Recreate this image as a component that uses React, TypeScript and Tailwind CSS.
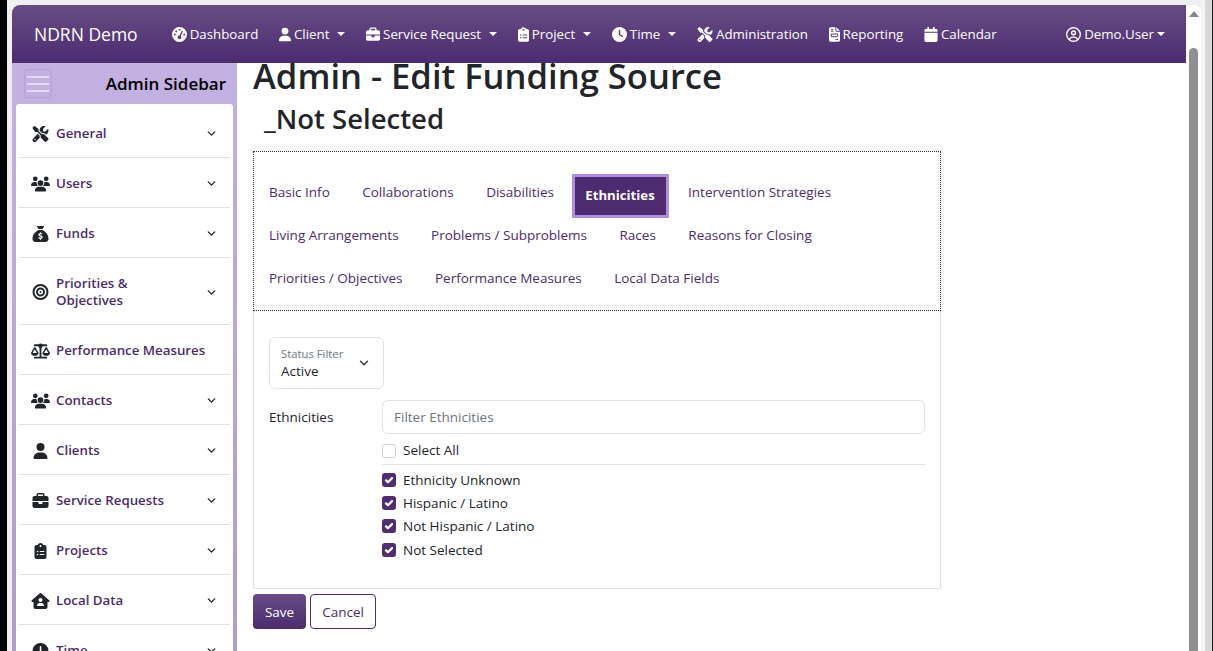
import {
  FaGaugeHigh,
  FaUser,
  FaBriefcase,
  FaClipboardList,
  FaClock,
  FaScrewdriverWrench,
  FaFileInvoice,
  FaCalendar,
  FaRegCircleUser,
  FaUsers,
  FaBullseye,
  FaScaleBalanced,
  FaHouseUser,
  FaSackDollar,
} from "react-icons/fa6";
import { LuChevronDown } from "react-icons/lu";
import type { ComponentType, ReactNode } from "react";

type Icon = ComponentType<{ className?: string }>;

const sidebarItems: { label: ReactNode; icon: Icon; h: string; chevron?: boolean }[] = [
  { label: "General", icon: FaScrewdriverWrench, h: "h-[50px]", chevron: true },
  { label: "Users", icon: FaUsers, h: "h-[50px]", chevron: true },
  { label: "Funds", icon: FaSackDollar, h: "h-[50px]", chevron: true },
  { label: <>Priorities &amp;<br />Objectives</>, icon: FaBullseye, h: "h-[67px]", chevron: true },
  { label: "Performance Measures", icon: FaScaleBalanced, h: "h-[50px]" },
  { label: "Contacts", icon: FaUsers, h: "h-[50px]", chevron: true },
  { label: "Clients", icon: FaUser, h: "h-[50px]", chevron: true },
  { label: "Service Requests", icon: FaBriefcase, h: "h-[50px]", chevron: true },
  { label: "Projects", icon: FaClipboardList, h: "h-[50px]", chevron: true },
  { label: "Local Data", icon: FaHouseUser, h: "h-[50px]", chevron: true },
  { label: "Time", icon: FaClock, h: "h-[50px]", chevron: true },
];

const tabRows = [
  ["Basic Info", "Collaborations", "Disabilities", "Ethnicities", "Intervention Strategies"],
  ["Living Arrangements", "Problems / Subproblems", "Races", "Reasons for Closing"],
  ["Priorities / Objectives", "Performance Measures", "Local Data Fields"],
];

const ethnicities = ["Ethnicity Unknown", "Hispanic / Latino", "Not Hispanic / Latino", "Not Selected"];

function NavLink({ icon: I, label, caret, w, caretGap = "ml-[5px]" }: { icon: Icon; label: string; caret?: boolean; w: string; caretGap?: string }) {
  return (
    <a className="flex items-center gap-[3px] text-[13.3px] text-white">
      <I className={`h-[15px] ${w}`} />
      <span className="pt-[1px]">{label}</span>
      {caret && <span className={`${caretGap} h-0 w-0 border-x-[4px] border-t-[4px] border-x-transparent border-t-white`} />}
    </a>
  );
}

function Checkbox({ checked }: { checked?: boolean }) {
  if (!checked) return <span className="h-[14px] w-[14px] rounded-[3px] border border-[#cfd3d8] bg-white" />;
  return (
    <span className="flex h-[14px] w-[14px] items-center justify-center rounded-[3px] bg-[#4f2d73]">
      <svg viewBox="0 0 16 16" className="h-[12px] w-[12px]" fill="none" stroke="white" strokeWidth="3" strokeLinecap="round" strokeLinejoin="round">
        <path d="m4 8.5 2.6 2.6L12 5.5" />
      </svg>
    </span>
  );
}

export default function App() {
  return (
    <div className="flex h-[651px] w-[1213px] overflow-hidden bg-[#f0f0f0] font-['Open_Sans',sans-serif] text-[13.5px] text-[#212529]">
      <div className="w-[7px] shrink-0 bg-black" />
      <div className="flex w-[1194px] shrink-0 flex-col pl-[5px] pt-[5px]">
        <div className="flex min-h-0 flex-1 overflow-hidden rounded-t-[8px] bg-white">
          <div className="flex min-w-0 flex-1 flex-col">
            <nav className="flex h-[58px] shrink-0 items-center bg-gradient-to-b from-[#684c85] to-[#4c2b70] pl-[22px] pr-[21px]">
              <span className="mr-[34px] text-[17.5px] text-white">NDRN Demo</span>
              <div className="flex items-center gap-[20.7px]">
                <NavLink icon={FaGaugeHigh} w="w-[15px]" label="Dashboard" />
                <NavLink icon={FaUser} w="w-[12px]" label="Client" caret />
                <NavLink icon={FaBriefcase} w="w-[14px]" label="Service Request" caret />
                <NavLink icon={FaClipboardList} w="w-[11px]" label="Project" caret />
                <NavLink icon={FaClock} w="w-[15px]" label="Time" caret />
                <NavLink icon={FaScrewdriverWrench} w="w-[16px]" label="Administration" />
                <NavLink icon={FaFileInvoice} w="w-[11px]" label="Reporting" />
                <NavLink icon={FaCalendar} w="w-[14px]" label="Calendar" />
              </div>
              <div className="ml-auto">
                <NavLink icon={FaRegCircleUser} w="w-[15px]" label="Demo.User" caret caretGap="ml-0" />
              </div>
            </nav>

            <div className="flex min-h-0 flex-1">
              <aside className="flex w-[225px] shrink-0 flex-col overflow-hidden bg-gradient-to-b from-[#c3b1e1] to-[#ae9cc9]">
                <div className="flex h-[41px] shrink-0 items-center justify-between pl-[12px] pr-[11px]">
                  <button className="flex h-[29px] w-[28px] flex-col items-center justify-center gap-[5px] rounded-[3px] border border-[#b5a2d4]">
                    <span className="h-[2px] w-[22px] bg-[#e4daf3]" />
                    <span className="h-[2px] w-[22px] bg-[#e4daf3]" />
                    <span className="h-[2px] w-[22px] bg-[#e4daf3]" />
                  </button>
                  <span className="text-[17px] font-semibold text-black">Admin Sidebar</span>
                </div>
                <div className="ml-[4px] mr-[4px] flex-1 rounded-t-[3px] bg-white px-[3px] pt-[4px]">
                  {sidebarItems.map((item, i) => (
                    <div key={i} className={`flex ${item.h} shrink-0 items-center border-b border-[#dee2e6] pl-[12px] pr-[12px] pt-[2px]`}>
                      <item.icon className="h-[16px] w-[19px] shrink-0 text-[#212529]" />
                      <span className="ml-[6px] flex-1 text-[13.3px] font-semibold leading-[17px] text-[#4c2b70]">{item.label}</span>
                      {item.chevron && <LuChevronDown className="h-[13px] w-[13px] text-[#212529]" strokeWidth={2.5} />}
                    </div>
                  ))}
                </div>
              </aside>

              <main className="min-w-0 flex-1 pl-[16px]">
                <h1 className="mt-[-7px] text-[34.6px] font-semibold leading-[40px] text-[#212529]">Admin - Edit Funding Source</h1>
                <h2 className="ml-[11px] mt-[5px] text-[27.5px] font-semibold leading-[36px] text-[#212529]">_Not Selected</h2>

                <div className="mt-[14px] h-[160px] w-[688px] border border-dotted border-[#333] px-[15px] pt-[19px]">
                  {tabRows.map((row, r) => (
                    <div key={r} className="flex h-[43px] items-center gap-[32.5px]">
                      {row.map((t) =>
                        t === "Ethnicities" ? (
                          <span key={t} className="-ml-[15px] -mr-[13px] mt-[6px] flex h-[44px] w-[97px] shrink-0 items-center justify-center border-[3px] border-[#b08ee0] bg-[#4c2b70] text-[13.2px] font-bold text-white">
                            {t}
                          </span>
                        ) : (
                          <span key={t} className="text-[#4c2b70]">{t}</span>
                        ),
                      )}
                    </div>
                  ))}
                </div>

                <div className="h-[278px] w-[688px] border-x border-b border-[#dee2e6] px-[15px] pt-[26px]">
                  <div className="flex h-[52px] w-[115px] items-center justify-between rounded-[6px] border border-[#dee2e6] pl-[11px] pr-[12px]">
                    <div className="pt-[1px]">
                      <div className="text-[11.3px] leading-[14px] text-[#6c757d]">Status Filter</div>
                      <div className="leading-[20px]">Active</div>
                    </div>
                    <LuChevronDown className="h-[14px] w-[14px] text-[#343a40]" strokeWidth={2.5} />
                  </div>
                  <div className="mt-[11px] flex">
                    <label className="w-[113px] pt-[7px]">Ethnicities</label>
                    <div className="flex-1">
                      <div className="flex h-[34px] items-center rounded-[6px] border border-[#dee2e6] px-[11px] text-[#6c757d]">Filter Ethnicities</div>
                      <div className="mt-[5px] flex h-[23px] items-center gap-[7px]">
                        <Checkbox />
                        <span>Select All</span>
                      </div>
                      <div className="mt-[2px] border-t border-[#dee2e6] pt-[3px]">
                        {ethnicities.map((e) => (
                          <div key={e} className="flex h-[23.4px] items-center gap-[7px]">
                            <Checkbox checked />
                            <span>{e}</span>
                          </div>
                        ))}
                      </div>
                    </div>
                  </div>
                </div>

                <div className="mt-[5px] flex gap-[4px]">
                  <button className="h-[35px] w-[53px] rounded-[4px] bg-gradient-to-b from-[#684c85] to-[#4c2b70] pt-[1px] text-white">Save</button>
                  <button className="h-[35px] w-[66px] rounded-[4px] border border-[#4c2b70] bg-white pt-[1px] text-[#4c2b70]">Cancel</button>
                </div>
              </main>
            </div>
          </div>

          <div className="flex w-[15px] shrink-0 flex-col items-center bg-white">
            <span className="mt-[6px] h-0 w-0 border-x-[5px] border-b-[6px] border-x-transparent border-b-[#888]" />
            <span className="mt-[31px] w-[9px] flex-1 rounded-t-[5px] bg-[#8f8f8f]" />
          </div>
        </div>
      </div>
      <div className="w-[4px] shrink-0 bg-[#f5f5f5]" />
      <div className="w-[7px] shrink-0 bg-[#d8d8d8]" />
      <div className="w-[1px] shrink-0 bg-[#222]" />
    </div>
  );
}
